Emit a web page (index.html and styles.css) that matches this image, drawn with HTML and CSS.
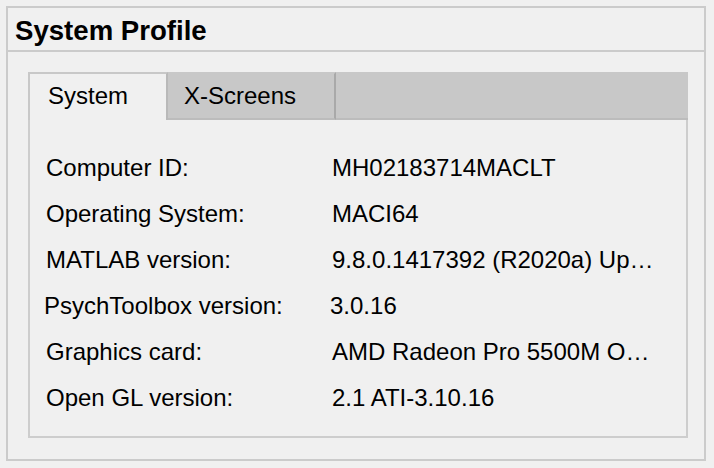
FILE: index.html
```html
<!DOCTYPE html>
<html>
<head>
<meta charset="utf-8">
<link rel="stylesheet" href="styles.css">
</head>
<body>
<div class="panel">
  <div class="panel-title">System Profile</div>
  <div class="panel-body">
    <div class="tabgroup">
      <div class="tabstrip">
        <div class="tab tab-active">System</div>
        <div class="tab tab-idle">X-Screens</div>
        <div class="tab-fill"></div>
      </div>
      <div class="tab-content">
        <div class="row"><span class="label">Computer ID:</span><span class="value">MH02183714MACLT</span></div>
        <div class="row"><span class="label">Operating System:</span><span class="value">MACI64</span></div>
        <div class="row"><span class="label">MATLAB version:</span><span class="value">9.8.0.1417392 (R2020a) Up…</span></div>
        <div class="row row-shift"><span class="label">PsychToolbox version:</span><span class="value">3.0.16</span></div>
        <div class="row"><span class="label">Graphics card:</span><span class="value">AMD Radeon Pro 5500M O…</span></div>
        <div class="row"><span class="label">Open GL version:</span><span class="value">2.1 ATI-3.10.16</span></div>
      </div>
    </div>
  </div>
</div>
</body>
</html>
```
FILE: styles.css
```css
html, body {
  margin: 0;
  padding: 0;
  background: #f0f0f0;
}
body {
  font-family: "Liberation Sans", Arial, sans-serif;
  color: #000;
}
.panel {
  margin: 6px 0 0 6px;
  width: 700px;
  height: 455px;
  box-sizing: border-box;
  border: 2px solid #cbcbcb;
  display: flex;
  flex-direction: column;
}
.panel-title {
  height: 42px;
  border-bottom: 2px solid #cbcbcb;
  font-weight: bold;
  font-size: 27.6px;
  line-height: 46px;
  padding-left: 7px;
  flex: none;
}
.panel-body {
  flex: 1;
  padding: 20px 16px 21px 20px;
  display: flex;
  flex-direction: column;
}
.tabgroup {
  flex: 1;
  display: flex;
  flex-direction: column;
}
.tabstrip {
  display: flex;
  height: 48px;
  flex: none;
}
.tab {
  box-sizing: border-box;
  height: 48px;
  font-size: 24px;
  line-height: 46px;
}
.tab-active {
  width: 140px;
  background: #f0f0f0;
  border-left: 2px solid #c8c8c8;
  border-top: 2px solid #c8c8c8;
  border-right: 2px solid #b9b9b9;
  padding-left: 18px;
  line-height: 44px;
}
.tab-idle {
  width: 168px;
  background: #c8c8c8;
  border-top: 2px solid #c8c8c8;
  border-right: 2px solid #a9a9a9;
  border-bottom: 2px solid #bcbcbc;
  padding-left: 16px;
  line-height: 44px;
}
.tab-fill {
  flex: 1;
  background: #c8c8c8;
  border-bottom: 2px solid #bcbcbc;
}
.tab-content {
  flex: 1;
  border: 2px solid #cdcdcd;
  border-top: none;
  padding: 25px 0 0 16px;
}
.row {
  display: flex;
  height: 46px;
  line-height: 46px;
  font-size: 24px;
  white-space: nowrap;
}
.label {
  width: 286px;
  flex: none;
}
.value {
  flex: none;
}
.row-shift {
  margin-left: -2px;
}
```
